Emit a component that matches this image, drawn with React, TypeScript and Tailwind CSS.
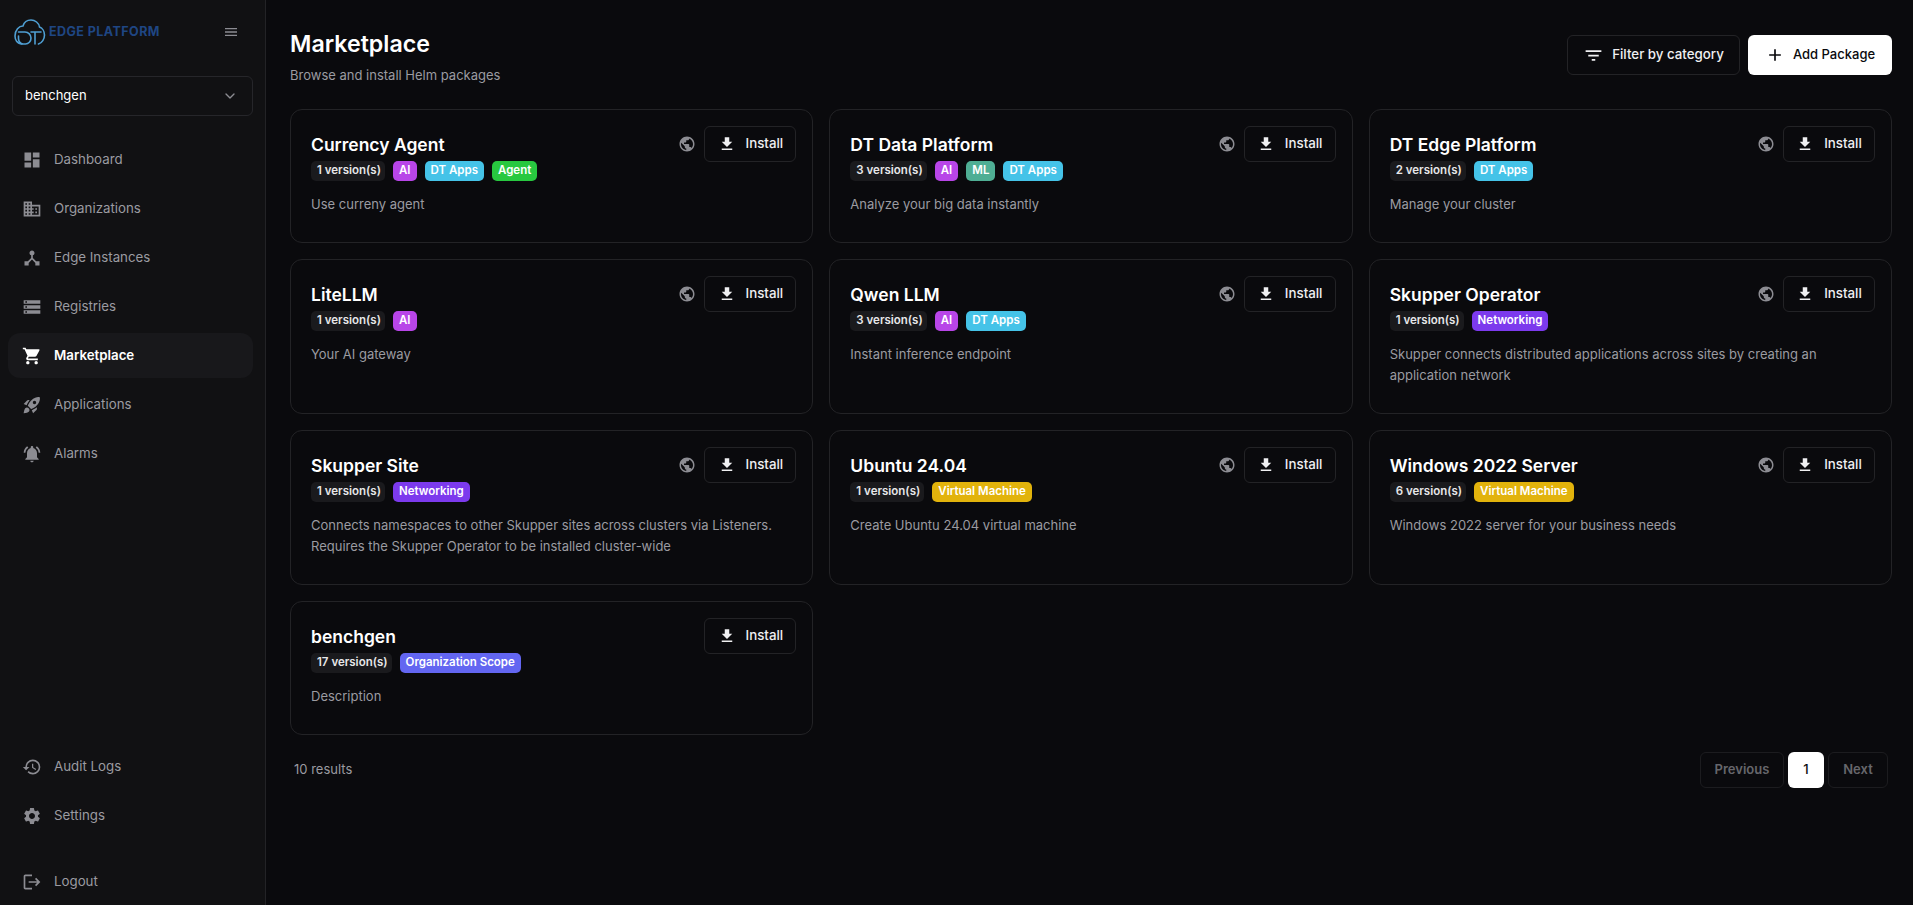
import {
  MdDashboard,
  MdDomain,
  MdDeviceHub,
  MdStorage,
  MdShoppingCart,
  MdRocketLaunch,
  MdNotificationsActive,
  MdHistory,
  MdSettings,
  MdLogout,
  MdPublic,
  MdFileDownload,
  MdFilterList,
  MdAdd,
  MdMenu,
} from "react-icons/md";
import { ChevronDown } from "lucide-react";
import type { IconType } from "react-icons";

interface Tag {
  label: string;
  color: string;
}

interface Pkg {
  name: string;
  versions: number;
  tags: Tag[];
  description: string;
  global?: boolean;
}

const AI = { label: "AI", color: "bg-[#b845e8]" };
const ML = { label: "ML", color: "bg-[#4fae94]" };
const DT = { label: "DT Apps", color: "bg-[#45c3e8]" };
const AGENT = { label: "Agent", color: "bg-[#28c840]" };
const NET = { label: "Networking", color: "bg-[#7c3aed]" };
const VM = { label: "Virtual Machine", color: "bg-[#e2b30c]" };
const ORG = { label: "Organization Scope", color: "bg-[#6366f1]" };

const PACKAGES: Pkg[] = [
  { name: "Currency Agent", versions: 1, tags: [AI, DT, AGENT], description: "Use curreny agent", global: true },
  { name: "DT Data Platform", versions: 3, tags: [AI, ML, DT], description: "Analyze your big data instantly", global: true },
  { name: "DT Edge Platform", versions: 2, tags: [DT], description: "Manage your cluster", global: true },
  { name: "LiteLLM", versions: 1, tags: [AI], description: "Your AI gateway", global: true },
  { name: "Qwen LLM", versions: 3, tags: [AI, DT], description: "Instant inference endpoint", global: true },
  {
    name: "Skupper Operator",
    versions: 1,
    tags: [NET],
    description: "Skupper connects distributed applications across sites by creating an application network",
    global: true,
  },
  {
    name: "Skupper Site",
    versions: 1,
    tags: [NET],
    description:
      "Connects namespaces to other Skupper sites across clusters via Listeners. Requires the Skupper Operator to be installed cluster-wide",
    global: true,
  },
  { name: "Ubuntu 24.04", versions: 1, tags: [VM], description: "Create Ubuntu 24.04 virtual machine", global: true },
  { name: "Windows 2022 Server", versions: 6, tags: [VM], description: "Windows 2022 server for your business needs", global: true },
  { name: "benchgen", versions: 17, tags: [ORG], description: "Description" },
];

const NAV: { label: string; icon: IconType; active?: boolean }[] = [
  { label: "Dashboard", icon: MdDashboard },
  { label: "Organizations", icon: MdDomain },
  { label: "Edge Instances", icon: MdDeviceHub },
  { label: "Registries", icon: MdStorage },
  { label: "Marketplace", icon: MdShoppingCart, active: true },
  { label: "Applications", icon: MdRocketLaunch },
  { label: "Alarms", icon: MdNotificationsActive },
];

const NavItem = ({ label, icon: Icon, active }: { label: string; icon: IconType; active?: boolean }) => (
  <a
    className={`flex h-[45px] items-center gap-3 rounded-xl pl-[14px] text-[13.3px] ${
      active ? "bg-[#18181b] font-semibold text-white" : "text-[#9b9ba1]"
    }`}
  >
    <Icon className={`h-5 w-5 shrink-0 ${active ? "text-white" : "text-[#8c8c92]"}`} />
    {label}
  </a>
);

const Logo = () => (
  <svg width="32" height="26" viewBox="0 0 32 26" fill="none" stroke="#4f9fd3" strokeWidth="1.6" strokeLinecap="round">
    <path d="M8 25C3 25 1 20.5 1 17C1 11 5 7 9 7C10 3.5 13 1 17 1C21 1 25 4 25.5 8C28.5 9 30.5 12.5 30.5 16C30.5 20 28 24 24.5 25" />
    <path d="M4.5 13H11C14.5 13 17 16 17 19C17 22.5 14.5 25 11.5 25H9C6.5 25 4.5 22.5 4.5 19.5V17" />
    <path d="M17 13H27M21 13V25" />
  </svg>
);

const Sidebar = () => (
  <aside className="flex h-[905px] w-[266px] shrink-0 flex-col border-r border-[#232326] bg-[#111113]">
    <div className="flex h-[76px] items-start justify-between pl-[14px] pr-[26px] pt-[19px]">
      <div className="flex items-center gap-[3px]">
        <Logo />
        <span className="whitespace-nowrap text-[12.5px] font-bold tracking-[0.45px] text-[#1f4683]">EDGE PLATFORM</span>
      </div>
      <MdMenu className="mt-[5px] h-4 w-4 text-[#8c8c92]" />
    </div>
    <div className="pl-3 pr-3">
      <div className="flex h-10 items-center justify-between rounded-md border border-[#26262a] bg-[#111113] pl-3 pr-[14px] text-[13px] text-white">
        benchgen
        <ChevronDown className="h-4 w-4 text-[#8c8c92]" />
      </div>
    </div>
    <nav className="mt-[21px] flex flex-col gap-1 pl-2 pr-3">
      {NAV.map((n) => (
        <NavItem key={n.label} {...n} />
      ))}
    </nav>
    <div className="mt-auto flex flex-col gap-1 pl-2 pr-3">
      <NavItem label="Audit Logs" icon={MdHistory} />
      <NavItem label="Settings" icon={MdSettings} />
    </div>
    <div className="pb-[1px] pl-2 pr-3 pt-[21px]">
      <NavItem label="Logout" icon={MdLogout} />
    </div>
  </aside>
);

const PackageCard = ({ pkg }: { pkg: Pkg }) => (
  <div className="rounded-xl border border-[#232326] bg-[#0a0a0d] pb-[27px] pl-5 pr-4 pt-4">
    <div className="flex items-start justify-between">
      <div className="pt-1">
        <h3 className="text-[17.5px] font-semibold leading-[30px] text-white">{pkg.name}</h3>
        <div className="mt-[1px] flex items-center gap-2">
          <span className="flex h-5 items-center rounded-[5px] bg-[#1a1a1d] pl-[6px] pr-1 text-[11.5px] font-semibold text-[#e7e7e9]">
            {pkg.versions} version(s)
          </span>
          {pkg.tags.map((t) => (
            <span key={t.label} className={`flex h-5 items-center rounded-[5px] px-[6px] text-[11.5px] font-semibold text-white ${t.color}`}>
              {t.label}
            </span>
          ))}
        </div>
      </div>
      <div className="flex items-center gap-2">
        {pkg.global && <MdPublic className="h-[18px] w-[18px] text-[#8c8c92]" />}
        <button
          type="button"
          className="flex h-9 w-[92px] items-center justify-center gap-[10px] rounded-md border border-[#232326] text-[13.3px] font-medium text-[#f0f0f2]"
        >
          <MdFileDownload className="h-[18px] w-[18px]" />
          Install
        </button>
      </div>
    </div>
    <p className="mt-[13px] max-w-[470px] text-[13px] leading-[21px] text-[#9b9ba1]">{pkg.description}</p>
  </div>
);

export default function App() {
  return (
    <div className="flex h-[905px] w-[1913px] overflow-hidden bg-[#0a0a0d] font-['Inter',sans-serif]">
      <Sidebar />
      <main className="flex-1 pl-6 pr-[21px] pt-7">
        <div className="flex items-start justify-between">
          <div>
            <h1 className="text-[23.2px] font-semibold leading-8 text-white">Marketplace</h1>
            <p className="mt-1 text-[13px] leading-[22px] text-[#9b9ba1]">Browse and install Helm packages</p>
          </div>
          <div className="mt-[7px] flex gap-2">
            <button
              type="button"
              className="flex h-10 w-[173px] items-center justify-center gap-2 rounded-md border border-[#232326] text-[13.3px] font-medium text-[#f0f0f2]"
            >
              <MdFilterList className="h-[21px] w-[21px]" />
              Filter by category
            </button>
            <button
              type="button"
              className="flex h-10 w-[144px] items-center justify-center gap-2 rounded-md bg-white text-[13px] font-medium text-[#0a0a0d]"
            >
              <MdAdd className="h-5 w-5" />
              Add Package
            </button>
          </div>
        </div>
        <div className="mt-[23px] grid grid-cols-3 items-stretch gap-4">
          {PACKAGES.map((p) => (
            <PackageCard key={p.name} pkg={p} />
          ))}
        </div>
        <div className="mt-[17px] flex items-center justify-between pl-1 pr-1">
          <span className="text-[13px] text-[#9b9ba1]">10 results</span>
          <div className="flex items-center gap-1 text-[13px] font-semibold">
            <span className="flex h-9 w-[84px] items-center justify-center rounded-md border border-[#1c1c1f] text-[#66666b]">
              Previous
            </span>
            <span className="flex h-9 w-9 items-center justify-center rounded-md bg-white font-medium text-[#0a0a0d]">1</span>
            <span className="flex h-9 w-[60px] items-center justify-center rounded-md border border-[#1c1c1f] text-[#66666b]">
              Next
            </span>
          </div>
        </div>
      </main>
    </div>
  );
}
